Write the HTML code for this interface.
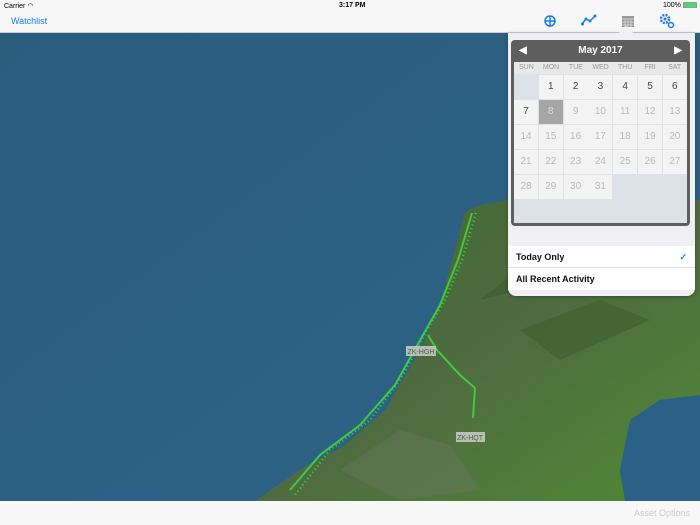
<!DOCTYPE html><html><head><style>
*{margin:0;padding:0;box-sizing:border-box}
body{width:700px;height:525px;overflow:hidden;font-family:"Liberation Sans",sans-serif;position:relative;background:#2b5b7b}
.top{position:absolute;left:0;top:0;width:700px;height:33px;background:#f7f7f7;border-bottom:1px solid #ccc}
.bot{position:absolute;left:0;top:501px;width:700px;height:24px;background:#f7f7f7}
.pop{position:absolute;left:508px;top:33px;width:187px;height:263px;background:#efeff4;border-radius:0 0 8px 8px;box-shadow:0 1px 4px rgba(0,0,0,.3)}
.cal{position:absolute;left:3px;top:7px;width:179px;height:186px;background:#5e5e5e;border-radius:4px;overflow:hidden}
.g{position:absolute;left:3px;top:22px;width:173px;height:161px;background:#dde2e8}
.dn{display:flex;height:12px;background:#e8e8e8;font-size:7px;color:#999}
.dn span{flex:1;text-align:center;line-height:12px}
.c{position:absolute;width:24px;height:24px;background:#f3f3f3;font-size:10px;color:#bbb;text-align:center;line-height:24px}
.row{position:absolute;left:0;width:187px;height:22px;background:#fff;font-size:9px;font-weight:bold;padding-left:8px;line-height:22px;color:#111}
</style></head><body>
<svg width="700" height="525" style="position:absolute;left:0;top:0">
<defs><linearGradient id="o" x1="0" y1="0" x2="1" y2="1"><stop offset="0" stop-color="#2a5c7e"/><stop offset="1" stop-color="#2e6488"/></linearGradient>
<linearGradient id="l" x1="0" y1="0" x2="1" y2="1"><stop offset="0" stop-color="#3f6a30"/><stop offset=".5" stop-color="#4f6b40"/><stop offset="1" stop-color="#4f8a35"/></linearGradient></defs>
<rect width="700" height="525" fill="url(#o)"/>
<path d="M465 212 L480 205 L508 200 L700 200 L700 395 L660 400 L630 420 L620 470 L625 501 L255 501 L300 470 L345 445 L385 410 L420 350 L440 305 L452 260 Z" fill="url(#l)"/>
<path d="M700 395 L660 400 L630 420 L620 470 L625 501 L700 501Z" fill="#2b6187"/>
<path d="M340 470 L400 430 L450 445 L480 490 L400 500Z" fill="#6a7560" opacity=".45"/>
<path d="M520 330 L600 300 L650 320 L560 360Z M480 300 L530 260 L560 280Z" fill="#3a5a2a" opacity=".5"/>
<polyline points="476,213 462,260 445,300 427,330 400,380 370,420 330,450 295,495" fill="none" stroke="#3ecb3e" stroke-width="2.5" stroke-dasharray="1 3"/>
<polyline points="472,213 458,260 440,305 423,335 395,385 360,425 320,455 290,490" fill="none" stroke="#3ecb3e" stroke-width="2"/>
<polyline points="428,335 437,350 460,375 475,388 473,418" fill="none" stroke="#3ecb3e" stroke-width="2"/>
<rect x="406" y="346" width="30" height="10" fill="#c8cfc8" opacity=".85"/>
<text x="421" y="354" font-size="7" text-anchor="middle" fill="#555" font-family="Liberation Sans">ZK-HGH</text>
<rect x="456" y="432" width="29" height="10" fill="#c8cfc8" opacity=".85"/>
<text x="470" y="440" font-size="7" text-anchor="middle" fill="#555" font-family="Liberation Sans">ZK-HQT</text>
</svg>
<div class="top">
<div style="position:absolute;left:4px;top:2px;font-size:7px">Carrier ◠</div>
<div style="position:absolute;left:339px;top:2px;font-size:7px;font-weight:bold">3:17 PM</div>
<div style="position:absolute;left:663px;top:2px;font-size:7px">100% <span style="display:inline-block;width:14px;height:6px;background:#4cd964;border:1px solid #999;vertical-align:middle"></span></div>
<div style="position:absolute;left:11px;top:16px;font-size:9px;color:#1a7bf2">Watchlist</div>
<svg style="position:absolute;left:543px;top:14px" width="14" height="14"><circle cx="7" cy="7" r="5" fill="none" stroke="#1a7bf2" stroke-width="1.5"/><path d="M2 7H12M7 2V12" stroke="#1a7bf2" stroke-width="1.5"/></svg>
<svg style="position:absolute;left:581px;top:14px" width="16" height="12"><polyline points="1,10 5,5 9,7 14,2" fill="none" stroke="#1a7bf2" stroke-width="1.5"/><circle cx="1.5" cy="10" r="1.5" fill="#1a7bf2"/><circle cx="5" cy="5" r="1.5" fill="#1a7bf2"/><circle cx="9" cy="7" r="1.5" fill="#1a7bf2"/><circle cx="14" cy="2" r="1.5" fill="#1a7bf2"/></svg>
<svg style="position:absolute;left:621px;top:14px" width="14" height="14"><rect x="1" y="2" width="12" height="11" fill="#999"/><path d="M1 5H13M4 5V13M7 5V13M10 5V13M1 8H13M1 11H13" stroke="#ddd" stroke-width=".7"/></svg>
<svg style="position:absolute;left:659px;top:13px" width="16" height="16"><circle cx="6" cy="6" r="4" fill="none" stroke="#1a7bf2" stroke-width="2.5" stroke-dasharray="2 1.2"/><circle cx="6" cy="6" r="1.5" fill="#1a7bf2"/><circle cx="12" cy="12" r="2.5" fill="none" stroke="#1a7bf2" stroke-width="1.5"/></svg>
</div>
<div class="pop">
<div style="position:absolute;left:113px;top:-5px;width:10px;height:10px;background:#efeff4;transform:rotate(45deg)"></div>
<div class="cal">
<div style="height:22px;color:#fff;font-size:10px;font-weight:bold;line-height:22px;text-align:center;position:relative">May 2017<span style="position:absolute;left:8px">◀</span><span style="position:absolute;right:8px">▶</span></div>
<div class="g">
<div class="dn"><span>SUN</span><span>MON</span><span>TUE</span><span>WED</span><span>THU</span><span>FRI</span><span>SAT</span></div>
<div id="cells"></div>
</div></div>
<div class="row" style="top:213px;border-bottom:1px solid #e0e0e0">Today Only<span style="position:absolute;right:8px;color:#1a7bf2">✓</span></div>
<div class="row" style="top:235px">All Recent Activity</div>
</div>
<div class="bot"><div style="position:absolute;right:10px;top:7px;font-size:9px;color:#ccc">Asset Options</div></div>
<script>
var h='';for(var d=1;d<=31;d++){var i=d;var r=Math.floor(i/7),c=i%7;var st='left:'+(c*24.8)+'px;top:'+(13+r*25)+'px;';var col='';if(d<=7)col='color:#444;';if(d==8)col='background:#a6a6a6;color:#ddd;';h+='<div class="c" style="'+st+col+'">'+d+'</div>';}
document.getElementById('cells').innerHTML=h;
</script>
</body></html>
